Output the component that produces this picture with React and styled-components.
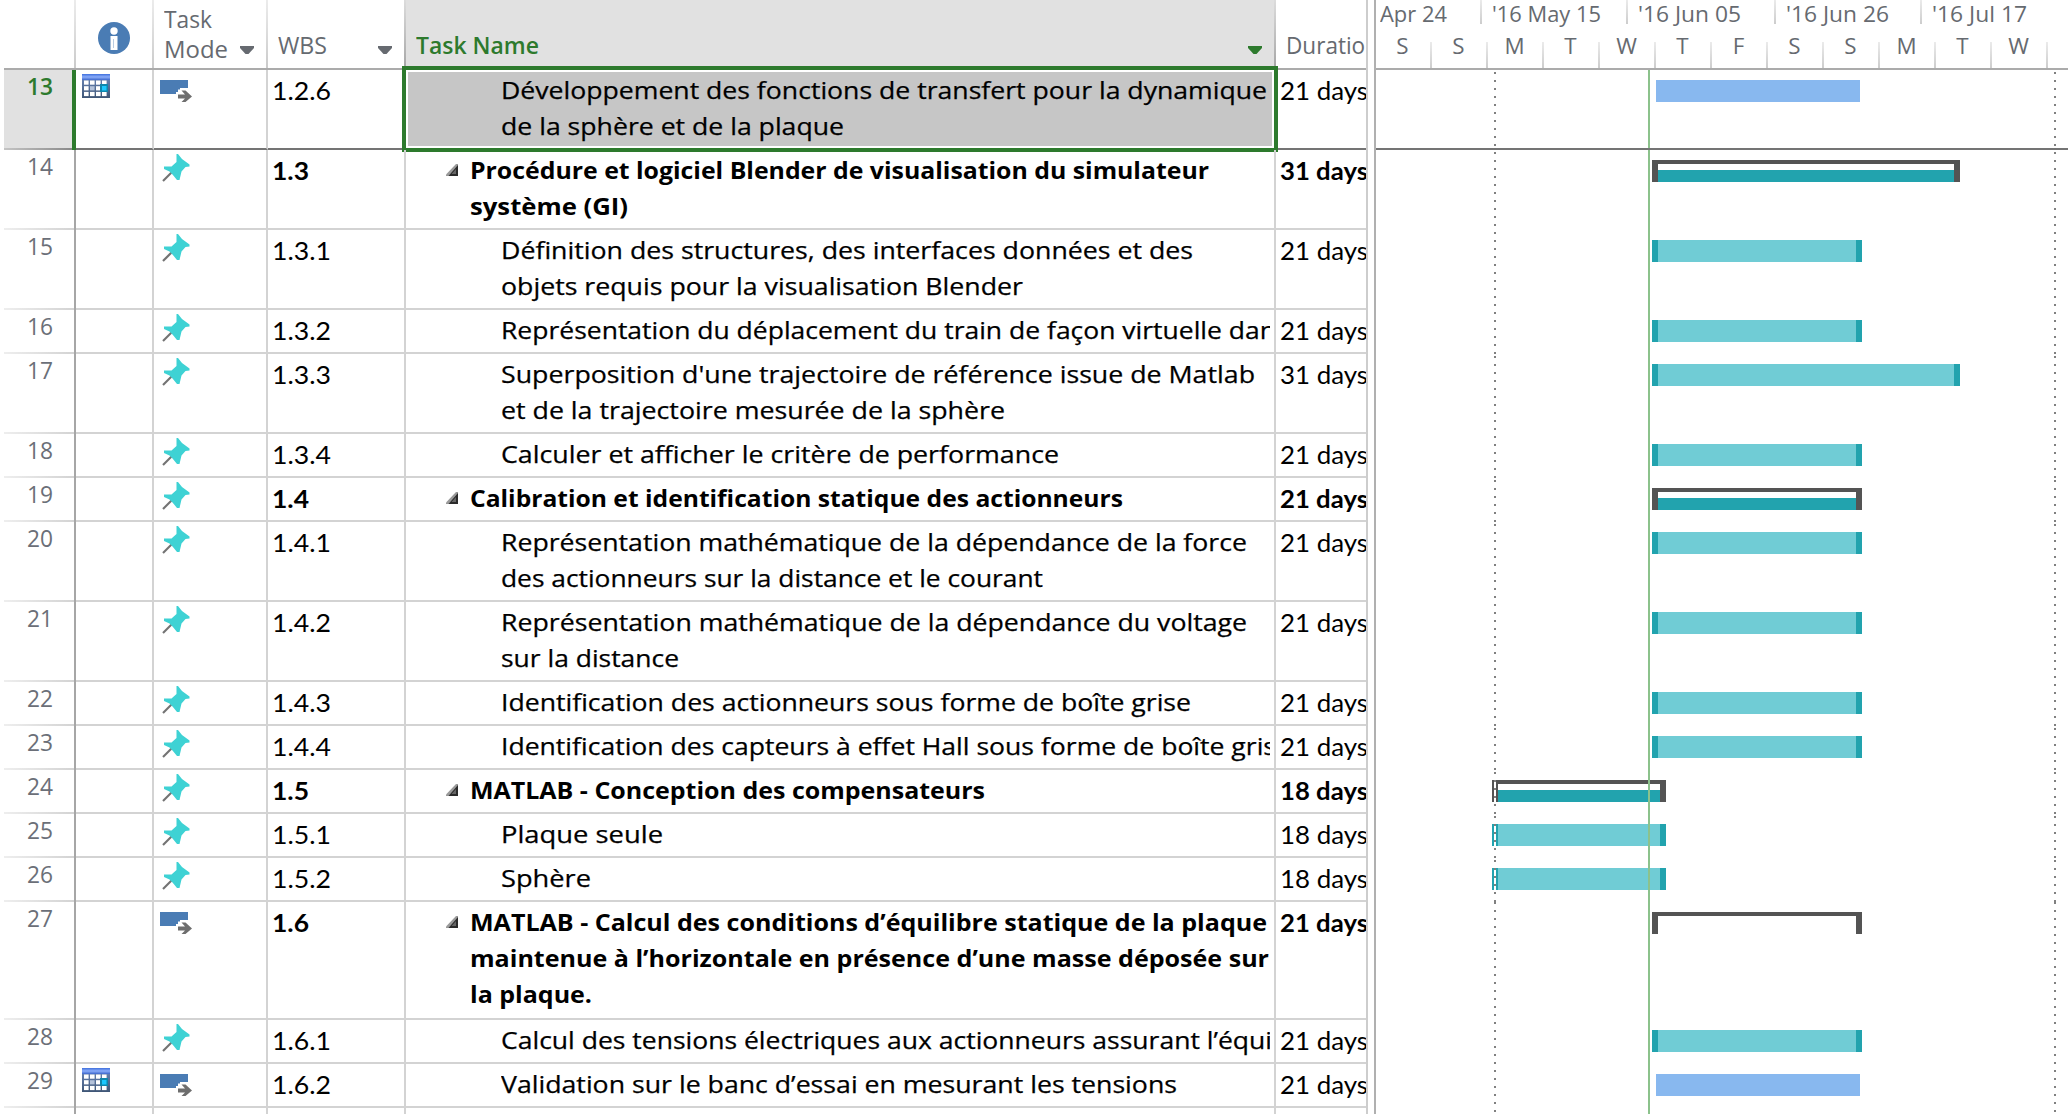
import React, { useLayoutEffect, useRef } from "react";
import styled, { createGlobalStyle, css } from "styled-components";

const GlobalStyle = createGlobalStyle`
  *, *::before, *::after { box-sizing: border-box; }
  html, body { margin: 0; padding: 0; background: #fff; overflow: hidden; }
`;

const UI_FONT = '"Open Sans", "Noto Sans", sans-serif';
const CELL_FONT = 'Lato, "Open Sans", sans-serif';
const GREEN = "#2d7a2d";
const RULE = "#d3d3d3";
const SHEET_COLUMNS = "4px 72px 78px 114px 138px 870px 90px";
const GANTT_X = 1376;

/* ---------- layout ---------- */

const Page = styled.div`
  width: 2068px;
  height: 1114px;
  display: flex;
  overflow: hidden;
  background: #fff;
`;

const Sheet = styled.div`
  width: 1366px;
  flex: none;
  overflow: hidden;
`;

const Splitter = styled.div`
  width: 10px;
  flex: none;
  border-left: 2px solid #cdcdcd;
  border-right: 2px solid #b0b0b0;
`;

const Gantt = styled.div`
  flex: 1;
  min-width: 0;
  position: relative;
  overflow: hidden;
`;

/* ---------- sheet header ---------- */

const HeadRow = styled.div`
  display: grid;
  grid-template-columns: ${SHEET_COLUMNS};
  height: 70px;
`;

const HeadCell = styled.div`
  position: relative;
  display: flex;
  align-items: flex-end;
  justify-content: space-between;
  padding: 0 14px 8px 10px;
  overflow: hidden;
  border-bottom: 2px solid #ababab;
  background: ${(p) => (p.$active ? "#e1e1e1" : "#fff")};
  font: ${(p) => (p.$active ? 600 : 400)} 24px/30px ${UI_FONT};
  color: ${(p) => (p.$active ? GREEN : "#666a70")};
  &::after {
    content: "";
    position: absolute;
    right: 0;
    top: 0;
    width: 2px;
    height: 68px;
    background: ${(p) =>
      p.$strong
        ? "linear-gradient(#dcdcdc, #a6a6a6)"
        : "linear-gradient(#ececec, #cbcbcb)"};
    display: ${(p) => (p.$last ? "none" : "block")};
  }
`;

const InfoCell = styled(HeadCell)`
  justify-content: center;
  padding: 0 2px 14px 0;
`;

const Arrow = styled.svg`
  display: block;
  width: 14px;
  height: 8px;
  margin-bottom: ${(p) => p.$lift}px;
  fill: ${(p) => (p.$active ? GREEN : "#666a70")};
`;

const Caption = styled.div`
  margin-bottom: ${(p) => p.$drop || 0}px;
`;

/* ---------- sheet rows ---------- */

const Row = styled.div`
  position: relative;
  display: grid;
  grid-template-columns: ${SHEET_COLUMNS};
  height: ${(p) => p.$h}px;
`;

const Cell = styled.div`
  position: relative;
  min-width: 0;
  padding: ${(p) => p.$pad || "2px 0 0 4px"};
  overflow: hidden;
  border-right: 2px solid ${RULE};
  border-bottom: 2px solid ${(p) => (p.$current ? "#747474" : RULE)};
  font: ${(p) => (p.$bold ? 700 : 400)} 25px/36px ${CELL_FONT};
  color: #000;
  white-space: nowrap;
`;

const NameCell = styled(Cell)`
  font: ${(p) => (p.$bold ? 700 : 400)} 24px/36px ${UI_FONT};
  -webkit-text-stroke: ${(p) => (p.$bold ? 0 : "0.25px #000")};
`;

const DurationCell = styled(Cell)`
  border-right: 0;
`;

const Margin = styled.div``;

const RowNumber = styled.div`
  position: relative;
  padding: 0 21px 0 0;
  text-align: right;
  font: 400 24px/32px ${UI_FONT};
  color: #6b6f78;
  border-right: 2px solid #a6a6a6;
  &::after {
    content: "";
    position: absolute;
    left: 0;
    right: 0;
    bottom: 0;
    height: 2px;
    background: linear-gradient(to right, #eee, ${RULE});
  }
  ${(p) =>
    p.$current &&
    css`
      background: #e1e1e1;
      color: ${GREEN};
      font-weight: 600;
      border-right: 4px solid ${GREEN};
      padding-right: 19px;
      &::after {
        background: linear-gradient(to right, #c4c4c4, #8a8a8a);
      }
    `}
`;

const Selection = styled.div`
  position: absolute;
  left: 402px;
  top: -4px;
  width: 876px;
  height: 86px;
  padding: 2px 0 0 95px;
  border: 4px solid ${GREEN};
  box-shadow: inset 0 0 0 2px #fff;
  background: #c6c6c6;
  font: 400 24px/36px ${UI_FONT};
  -webkit-text-stroke: 0.25px #000;
  white-space: nowrap;
`;

const Clip = styled.div`
  margin-left: ${(p) => (p.$indent ? 93 : 62)}px;
  width: ${(p) => (p.$indent ? 769 : 800)}px;
  overflow: hidden;
`;

const Line = styled.div`
  height: 36px;
`;

const Run = styled.span`
  display: inline-block;
  white-space: pre;
  transform-origin: 0 50%;
`;

const Collapse = styled.svg`
  position: absolute;
  left: 40px;
  top: 14px;
  width: 12px;
  height: 12px;
`;

const Icon = styled.svg`
  display: block;
  overflow: visible;
  margin: ${(p) => p.$margin || 0};
`;

/* ---------- gantt ---------- */

const Timescale = styled.div`
  height: 70px;
  border-bottom: 2px solid #ababab;
  display: flex;
  flex-direction: column;
  justify-content: space-between;
  font: 400 22.4px/30px ${UI_FONT};
  color: #666a70;
`;

const Tier = styled.div`
  display: flex;
  height: ${(p) => p.$h}px;
`;

const Tick = styled.div`
  flex: none;
  width: ${(p) => p.$w}px;
  padding-left: ${(p) => p.$pad || 0}px;
  padding-right: ${(p) => (p.$center ? 3 : 0)}px;
  text-align: ${(p) => (p.$center ? "center" : "left")};
  line-height: ${(p) => (p.$center ? 8 : 28)}px;
  white-space: nowrap;
  background: linear-gradient(#ebebeb, #cdcdcd) right top / 2px 100% no-repeat;
`;

const GanttRow = styled.div`
  position: relative;
  height: ${(p) => p.$h}px;
  padding-top: 10px;
  border-bottom: ${(p) => (p.$current ? "2px solid #747474" : "0")};
`;

const dots = (x, offset) => css`
  content: "";
  position: absolute;
  top: 0;
  bottom: 0;
  left: ${x - GANTT_X}px;
  width: 2px;
  background: repeating-linear-gradient(#808080 0 2px, #fff 2px 8px) 0 ${offset}px / 2px 8px;
`;

const Guides = styled.div`
  &::before { ${(p) => dots(1494, p.$offset)} }
  &::after { ${(p) => dots(2054, p.$offset)} }
`;

const Today = styled.div`
  position: absolute;
  left: ${1648 - GANTT_X}px;
  top: ${(p) => p.$top}px;
  height: ${(p) => p.$h}px;
  width: 2px;
  background: #8cc28c;
`;

const Bar = styled.div`
  height: 22px;
  margin-left: ${(p) => p.$from - GANTT_X}px;
  width: ${(p) => p.$to - p.$from}px;
  ${(p) => p.$kind === "auto" && css`background: #88b8ef;`}
  ${(p) =>
    p.$kind === "manual" &&
    css`
      background: #70ccd5;
      border: solid #22a3ae;
      border-width: 0 6px;
    `}
  ${(p) =>
    (p.$kind === "summary" || p.$kind === "bracket") &&
    css`
      border: solid #545454;
      border-width: 0 6px;
      background: ${p.$kind === "summary"
        ? "linear-gradient(#545454 0 4px, #fff 4px 10px, #22a3ae 10px)"
        : "linear-gradient(#545454 0 4px, #fff 4px)"} padding-box;
    `}
`;

/* ---------- drawings ---------- */

const InfoIcon = () => (
  <Icon width="32" height="32" viewBox="0 0 32 32">
    <circle cx="16" cy="16" r="16" fill="#4a7cb4" />
    <circle cx="16" cy="9" r="3.7" fill="#fff" />
    <path d="M12.500 14H19.500V28H12.500Z" fill="#fff" />
    <path d="M15.500 17V26" stroke="#b9cce2" strokeWidth="1" />
  </Icon>
);

const PinIcon = () => (
  <Icon width="28" height="28" viewBox="0 0 28 28" $margin="2px 0 0 3.500px">
    <path d="M1 27L10 18" stroke="#737373" strokeWidth="2.200" />
    <path
      d="M14.500 0H16L20 5L27.500 10.500V12.500L23.500 13L19.500 17.500L17.500 26H15L10.500 20.500L7.500 17.500L2 15V12.500H9.500L14.500 8Z"
      fill="#3ed2d4"
    />
  </Icon>
);

const AutoIcon = () => (
  <Icon width="32" height="23" viewBox="0 0 32 23" $margin="8px 0 0 2px">
    <path d="M0 0H28V8H20V9.500H18V12H16V14H0Z" fill="#4a7cb4" />
    <path d="M18 14.500H25L21.500 10.500H25.500L32 16.500L25.500 22H21.500L25 18.500H18Z" fill="#6e6e6e" />
  </Icon>
);

const CalendarIcon = () => (
  <Icon width="28" height="24" viewBox="0 0 28 24" $margin="2px 0 0 2px">
    <defs>
      <linearGradient id="calTop" x1="0" y1="0" x2="0" y2="1">
        <stop offset="0" stopColor="#3f6fdc" />
        <stop offset="0.5" stopColor="#8aacfa" />
        <stop offset="1" stopColor="#3c66cc" />
      </linearGradient>
      <linearGradient id="calBody" x1="0" y1="0" x2="0" y2="1">
        <stop offset="0" stopColor="#6580b0" />
        <stop offset="1" stopColor="#3f5676" />
      </linearGradient>
    </defs>
    <rect y="5" width="28" height="19" fill="url(#calBody)" />
    <rect width="28" height="6" fill="url(#calTop)" />
    {[0, 1, 2].map((r) =>
      [0, 1, 2, 3].map((c) => (
        <rect
          key={`${r}${c}`}
          x={2 + c * 6}
          y={6.5 + r * 5.7}
          width={4.6}
          height={4.2}
          fill={r === 1 && c === 1 ? "#b4c2da" : "#fff"}
        />
      ))
    )}
    <rect x="18" y="10" width="8" height="8" fill="#0f86ac" />
    <rect x="20" y="12" width="4.500" height="4.500" fill="#1cc8ff" />
  </Icon>
);

const DropArrow = ({ active, lift = 0 }) => (
  <Arrow viewBox="0 0 14 8" $active={active} $lift={lift}>
    <path d="M0 0H14V2L8.500 8H5.500L0 2Z" />
  </Arrow>
);

const CollapseMark = () => (
  <Collapse viewBox="0 0 12 12">
    <path d="M12 0V12H0V10.500L10 0Z" fill="#9a9a9a" />
    <path d="M12 1V12H2.500Z" fill="#2b2b2b" />
    <path d="M10 5V10H5.500Z" fill="#666" />
  </Collapse>
);

/* Stretches a run of text so that it fills a given width. */
function Fit({ width, children }) {
  const ref = useRef(null);
  useLayoutEffect(() => {
    const el = ref.current;
    el.style.transform = "none";
    const natural = el.getBoundingClientRect().width;
    el.style.transform = `scaleX(${width / natural})`;
    el.style.marginRight = `${width - natural}px`;
  }, [width, children]);
  return <Run ref={ref}>{children}</Run>;
}

/* ---------- data ---------- */

const JUL = 1960;
const JUN = 1862;

const TASKS = [
  { n: 13, h: 80, cal: true, auto: true, wbs: "1.2.6", days: 21, bar: ["auto", 1656, 1860],
    lines: [["Développement des fonctions de transfert pour la dynamique", 766], ["de la sphère et de la plaque", 343]] },
  { n: 14, h: 80, wbs: "1.3", bold: true, days: 31, bar: ["summary", 1652, JUL],
    lines: [["Procédure et logiciel Blender de visualisation du simulateur", 739], ["système (GI)", 158]] },
  { n: 15, h: 80, wbs: "1.3.1", days: 21, bar: ["manual", 1652, JUN],
    lines: [["Définition des structures, des interfaces données et des", 692], ["objets requis pour la visualisation Blender", 522]] },
  { n: 16, h: 44, wbs: "1.3.2", days: 21, bar: ["manual", 1652, JUN],
    lines: [["Représentation du déplacement du train de façon virtuelle dan", 775]] },
  { n: 17, h: 80, wbs: "1.3.3", days: 31, bar: ["manual", 1652, JUL],
    lines: [["Superposition d'une trajectoire de référence issue de Matlab", 754], ["et de la trajectoire mesurée de la sphère", 504]] },
  { n: 18, h: 44, wbs: "1.3.4", days: 21, bar: ["manual", 1652, JUN],
    lines: [["Calculer et afficher le critère de performance", 558]] },
  { n: 19, h: 44, wbs: "1.4", bold: true, days: 21, bar: ["summary", 1652, JUN],
    lines: [["Calibration et identification statique des actionneurs", 653]] },
  { n: 20, h: 80, wbs: "1.4.1", days: 21, bar: ["manual", 1652, JUN],
    lines: [["Représentation mathématique de la dépendance de la force", 746], ["des actionneurs sur la distance et le courant", 542]] },
  { n: 21, h: 80, wbs: "1.4.2", days: 21, bar: ["manual", 1652, JUN],
    lines: [["Représentation mathématique de la dépendance du voltage", 746], ["sur la distance", 178]] },
  { n: 22, h: 44, wbs: "1.4.3", days: 21, bar: ["manual", 1652, JUN],
    lines: [["Identification des actionneurs sous forme de boîte grise", 690]] },
  { n: 23, h: 44, wbs: "1.4.4", days: 21, bar: ["manual", 1652, JUN],
    lines: [["Identification des capteurs à effet Hall sous forme de boîte gris", 775]] },
  { n: 24, h: 44, wbs: "1.5", bold: true, days: 18, bar: ["summary", 1492, 1666],
    lines: [["MATLAB - Conception des compensateurs", 515]] },
  { n: 25, h: 44, wbs: "1.5.1", days: 18, bar: ["manual", 1492, 1666], lines: [["Plaque seule", 162]] },
  { n: 26, h: 44, wbs: "1.5.2", days: 18, bar: ["manual", 1492, 1666], lines: [["Sphère", 90]] },
  { n: 27, h: 118, auto: true, wbs: "1.6", bold: true, days: 21, bar: ["bracket", 1652, JUN], dot: 0,
    lines: [["MATLAB - Calcul des conditions d’équilibre statique de la plaque", 797],
      ["maintenue à l’horizontale en présence d’une masse déposée sur", 799], ["la plaque.", 122]] },
  { n: 28, h: 44, wbs: "1.6.1", days: 21, bar: ["manual", 1652, JUN],
    lines: [["Calcul des tensions électriques aux actionneurs assurant l’équi", 771]] },
  { n: 29, h: 44, cal: true, auto: true, wbs: "1.6.2", days: 21, bar: ["auto", 1656, 1860], dot: 6,
    lines: [["Validation sur le banc d’essai en mesurant les tensions", 676]] },
];

const MAJOR = [
  ["Apr 24", 106, 4, 67],
  ["'16 May 15", 146, 10, 109],
  ["'16 Jun 05", 148, 10, 103],
  ["'16 Jun 26", 146, 10, 103],
  ["'16 Jul 17", 148, 10, 95],
];
const MINOR = ["S", "S", "M", "T", "W", "T", "F", "S", "S", "M", "T", "W"];

const wbsWidth = (t) => (t.bold ? 37 : 59);

function TaskLines({ task }) {
  return task.lines.map(([text, w]) => (
    <Line key={text}>
      <Fit width={w}>{text}</Fit>
    </Line>
  ));
}

function TaskRow({ task, current }) {
  return (
    <Row $h={task.h}>
      <Margin />
      <RowNumber $current={current}>
        <Fit width={26}>{String(task.n)}</Fit>
      </RowNumber>
      <Cell $current={current}>{task.cal && <CalendarIcon />}</Cell>
      <Cell $current={current}>{task.auto ? <AutoIcon /> : <PinIcon />}</Cell>
      <Cell $current={current} $bold={task.bold}>
        <Fit width={wbsWidth(task)}>{task.wbs}</Fit>
      </Cell>
      <NameCell $current={current} $bold={task.bold} $pad="2px 0 0 2px">
        {task.bold && <CollapseMark />}
        {!current && (
          <Clip $indent={!task.bold}>
            <TaskLines task={task} />
          </Clip>
        )}
      </NameCell>
      <DurationCell $current={current} $bold={task.bold} $pad="2px 0 0 4px">
        <Fit width={88}>{`${task.days} days`}</Fit>
      </DurationCell>
      {current && (
        <Selection>
          <TaskLines task={task} />
        </Selection>
      )}
    </Row>
  );
}

export default function App() {
  return (
    <Page>
      <GlobalStyle />
      <Sheet>
        <HeadRow>
          <Margin />
          <HeadCell />
          <InfoCell>
            <InfoIcon />
          </InfoCell>
          <HeadCell>
            <Caption $drop={-4}>
              <Fit width={48}>Task</Fit>
              <br />
              <Fit width={64}>Mode</Fit>
            </Caption>
            <DropArrow lift={6} />
          </HeadCell>
          <HeadCell $strong>
            <Fit width={49}>WBS</Fit>
            <DropArrow lift={6} />
          </HeadCell>
          <HeadCell $active $strong>
            <Fit width={123}>Task Name</Fit>
            <DropArrow active lift={6} />
          </HeadCell>
          <HeadCell $last>
            <Fit width={93}>Duration</Fit>
          </HeadCell>
        </HeadRow>
        {TASKS.map((t, i) => (
          <TaskRow key={t.n} task={t} current={i === 0} />
        ))}
        <Row $h={44}>
          <Margin />
          <RowNumber />
          <Cell />
          <Cell />
          <Cell />
          <Cell />
          <DurationCell />
        </Row>
      </Sheet>
      <Splitter />
      <Gantt>
        <Timescale>
          <Tier $h={24}>
            {MAJOR.map(([label, w, pad, tw]) => (
              <Tick key={label} $w={w} $pad={pad}>
                <Fit width={tw}>{label}</Fit>
              </Tick>
            ))}
          </Tier>
          <Tier $h={26}>
            {MINOR.map((d, i) => (
              <Tick key={i} $w={56} $center>
                {d}
              </Tick>
            ))}
          </Tier>
        </Timescale>
        {TASKS.map((t, i) => (
          <GanttRow key={t.n} $h={t.h} $current={i === 0}>
            <Bar $kind={t.bar[0]} $from={t.bar[1]} $to={t.bar[2]} />
            <Guides $offset={t.dot ?? 2} />
          </GanttRow>
        ))}
        <GanttRow $h={44}>
          <Guides $offset={2} />
        </GanttRow>
        <Today $top={70} $h={78} />
        <Today $top={150} $h={964} />
      </Gantt>
    </Page>
  );
}
